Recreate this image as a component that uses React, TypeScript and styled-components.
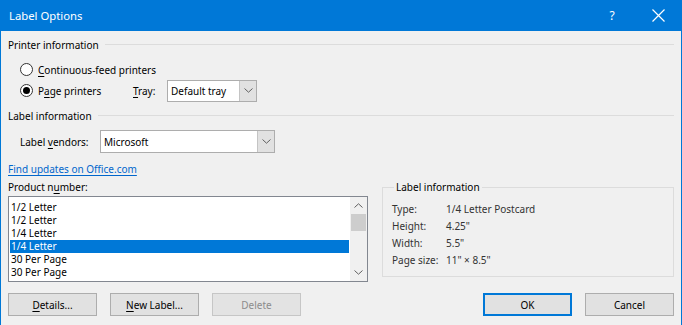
import React from "react";
import styled, { createGlobalStyle } from "styled-components";

const Global = createGlobalStyle`
  html, body { margin: 0; padding: 0; background: #f0f0f0; }
  body { font-family: "Noto Sans", "Open Sans", sans-serif; font-size: 10px; color: #000; }
  * { box-sizing: border-box; }
`;

const Window = styled.div`
  width: 682px;
  height: 325px;
  background: #f0f0f0;
  border-left: 1px solid #0078d7;
  border-right: 1px solid #0078d7;
  display: flex;
  flex-direction: column;
  overflow: hidden;
`;

const TitleBar = styled.div`
  height: 31px;
  background: #0078d7;
  color: #fff;
  display: flex;
  align-items: center;
  padding-left: 8px;
  font-size: 11.3px;
`;

const Title = styled.div`
  flex: 1;
`;

const TitleButton = styled.div`
  width: 46px;
  height: 31px;
  display: flex;
  align-items: center;
  justify-content: center;
  font-size: 12px;
`;

const Body = styled.div`
  flex: 1;
  display: flex;
  flex-direction: column;
  padding: 6px 7px 0 7px;
`;

const GroupHeader = styled.div<{ $mt?: number }>`
  display: flex;
  align-items: center;
  height: 16px;
  line-height: 16px;
  margin-top: ${(p) => p.$mt ?? 0}px;
  gap: 6px;
  &::after {
    content: "";
    flex: 1;
    border-top: 1px solid #dcdcdc;
    margin-top: -2px;
  }
`;

const RadioRow = styled.div<{ $mt?: number }>`
  display: flex;
  align-items: center;
  height: 21px;
  margin-top: ${(p) => p.$mt ?? 0}px;
  padding-left: 12px;
`;

const Radio = styled.span<{ $checked?: boolean }>`
  width: 13px;
  height: 13px;
  border-radius: 50%;
  border: 1px solid #333;
  background: #fff;
  display: inline-flex;
  align-items: center;
  justify-content: center;
  margin-right: 5px;
  &::after {
    content: "";
    width: 7px;
    height: 7px;
    border-radius: 50%;
    background: ${(p) => (p.$checked ? "#000" : "transparent")};
  }
`;

const Key = styled.span`
  text-decoration: underline;
  text-underline-offset: 2px;
`;

const FieldLabel = styled.span<{ $w?: number }>`
  width: ${(p) => (p.$w ? `${p.$w}px` : "auto")};
  flex-shrink: 0;
  white-space: nowrap;
`;

const Select = styled.div<{ $w: number; $h: number }>`
  width: ${(p) => p.$w}px;
  height: ${(p) => p.$h}px;
  background: #fff;
  border: 1px solid #adadad;
  display: flex;
  align-items: stretch;
`;

const SelectText = styled.div`
  flex: 1;
  display: flex;
  align-items: center;
  padding-left: 3px;
`;

const SelectButton = styled.div`
  width: 17px;
  background: #e1e1e1;
  border-left: 1px solid #c4c4c4;
  display: flex;
  align-items: center;
  justify-content: center;
`;

const VendorRow = styled.div`
  display: flex;
  align-items: center;
  height: 23px;
  margin-top: 6px;
  padding-left: 12px;
`;

const Link = styled.a`
  display: block;
  height: 16px;
  line-height: 16px;
  margin-top: 8px;
  color: #0066cc;
  text-decoration: underline;
  text-underline-offset: 2px;
  width: max-content;
`;

const Main = styled.div`
  display: flex;
  margin-top: 2px;
  gap: 14px;
`;

const LeftCol = styled.div`
  display: flex;
  flex-direction: column;
  width: 360px;
`;

const PlainLabel = styled.div`
  height: 16px;
  line-height: 16px;
`;

const ListBox = styled.div`
  margin-top: 1px;
  height: 86px;
  background: #fff;
  border: 1px solid #828790;
  display: flex;
  overflow: hidden;
`;

const ListItems = styled.div`
  flex: 1;
  padding: 4px 1px 0 1px;
  display: flex;
  flex-direction: column;
`;

const ListItem = styled.div<{ $selected?: boolean }>`
  height: 13px;
  line-height: 13px;
  padding-left: 1px;
  background: ${(p) => (p.$selected ? "#0078d7" : "transparent")};
  color: ${(p) => (p.$selected ? "#fff" : "#000")};
  flex-shrink: 0;
`;

const ScrollBar = styled.div`
  width: 17px;
  background: #f0f0f0;
  display: flex;
  flex-direction: column;
`;

const ScrollArrow = styled.div`
  height: 17px;
  display: flex;
  align-items: center;
  justify-content: center;
`;

const ScrollTrack = styled.div`
  flex: 1;
  display: flex;
  flex-direction: column;
`;

const ScrollThumb = styled.div`
  height: 17px;
  margin: 0 1px;
  background: #cdcdcd;
`;

const InfoBox = styled.fieldset`
  flex: 1;
  margin: 0;
  margin-top: 1px;
  height: 97px;
  border: 1px solid #dcdcdc;
  padding: 6px 0 0 9px;
  display: grid;
  grid-template-columns: 54px 1fr;
  grid-auto-rows: 17px;
  align-content: start;
  align-items: center;
`;

const Legend = styled.legend`
  padding: 0 2px;
  margin-left: 2px;
`;

const Info = styled.div`
  color: #333;
`;

const ButtonRow = styled.div`
  display: flex;
  margin-top: 11px;
  gap: 13px;
`;

const Spacer = styled.div`
  flex: 1;
`;

const Button = styled.div<{ $primary?: boolean; $disabled?: boolean }>`
  width: 89px;
  height: 23px;
  display: flex;
  align-items: center;
  justify-content: center;
  background: ${(p) => (p.$disabled ? "#e3e3e3" : "#e1e1e1")};
  border: 1px solid ${(p) => (p.$primary ? "#0078d7" : p.$disabled ? "#c6c6c6" : "#adadad")};
  box-shadow: ${(p) => (p.$primary ? "inset 0 0 0 1px #0078d7" : "none")};
  color: ${(p) => (p.$disabled ? "#8c8c8c" : "#000")};
`;

const Chevron = ({ up }: { up?: boolean }) => (
  <svg width="9" height="5" viewBox="0 0 9 5">
    <path
      d={up ? "M0.5 4.5 L4.5 0.8 L8.5 4.5" : "M0.5 0.5 L4.5 4.2 L8.5 0.5"}
      fill="none"
      stroke="#606060"
      strokeWidth="1"
    />
  </svg>
);

const CloseIcon = () => (
  <svg width="13" height="13" viewBox="0 0 13 13">
    <path d="M0.5 0.5 L12.5 12.5 M12.5 0.5 L0.5 12.5" stroke="#fff" strokeWidth="1.2" />
  </svg>
);

const items = ["1/2 Letter", "1/2 Letter", "1/4 Letter", "1/4 Letter", "30 Per Page", "30 Per Page"];

export default function App() {
  return (
    <>
      <Global />
      <Window>
        <TitleBar>
          <Title>Label Options</Title>
          <TitleButton>?</TitleButton>
          <TitleButton>
            <CloseIcon />
          </TitleButton>
        </TitleBar>
        <Body>
          <GroupHeader>Printer information</GroupHeader>
          <RadioRow $mt={6}>
            <Radio />
            <span>
              <Key>C</Key>ontinuous-feed printers
            </span>
          </RadioRow>
          <RadioRow>
            <Radio $checked />
            <FieldLabel $w={95}>
              P<Key>a</Key>ge printers
            </FieldLabel>
            <FieldLabel $w={34}>
              <Key>T</Key>ray:
            </FieldLabel>
            <Select $w={90} $h={22}>
              <SelectText>Default tray</SelectText>
              <SelectButton>
                <Chevron />
              </SelectButton>
            </Select>
          </RadioRow>
          <GroupHeader $mt={7}>Label information</GroupHeader>
          <VendorRow>
            <FieldLabel $w={80}>
              Label <Key>v</Key>endors:
            </FieldLabel>
            <Select $w={175} $h={23}>
              <SelectText>Microsoft</SelectText>
              <SelectButton>
                <Chevron />
              </SelectButton>
            </Select>
          </VendorRow>
          <Link>Find updates on Office.com</Link>
          <Main>
            <LeftCol>
              <PlainLabel>
                Product n<Key>u</Key>mber:
              </PlainLabel>
              <ListBox>
                <ListItems>
                  {items.map((t, i) => (
                    <ListItem key={i} $selected={i === 3}>
                      {t}
                    </ListItem>
                  ))}
                </ListItems>
                <ScrollBar>
                  <ScrollArrow>
                    <Chevron up />
                  </ScrollArrow>
                  <ScrollTrack>
                    <ScrollThumb />
                  </ScrollTrack>
                  <ScrollArrow>
                    <Chevron />
                  </ScrollArrow>
                </ScrollBar>
              </ListBox>
            </LeftCol>
            <InfoBox>
              <Legend>Label information</Legend>
              <Info>Type:</Info>
              <Info>1/4 Letter Postcard</Info>
              <Info>Height:</Info>
              <Info>4.25"</Info>
              <Info>Width:</Info>
              <Info>5.5"</Info>
              <Info>Page size:</Info>
              <Info>11" × 8.5"</Info>
            </InfoBox>
          </Main>
          <ButtonRow>
            <Button>
              <span>
                <Key>D</Key>etails...
              </span>
            </Button>
            <Button>
              <span>
                <Key>N</Key>ew Label...
              </span>
            </Button>
            <Button $disabled>Delete</Button>
            <Spacer />
            <Button $primary>OK</Button>
            <Button>Cancel</Button>
          </ButtonRow>
        </Body>
      </Window>
    </>
  );
}
